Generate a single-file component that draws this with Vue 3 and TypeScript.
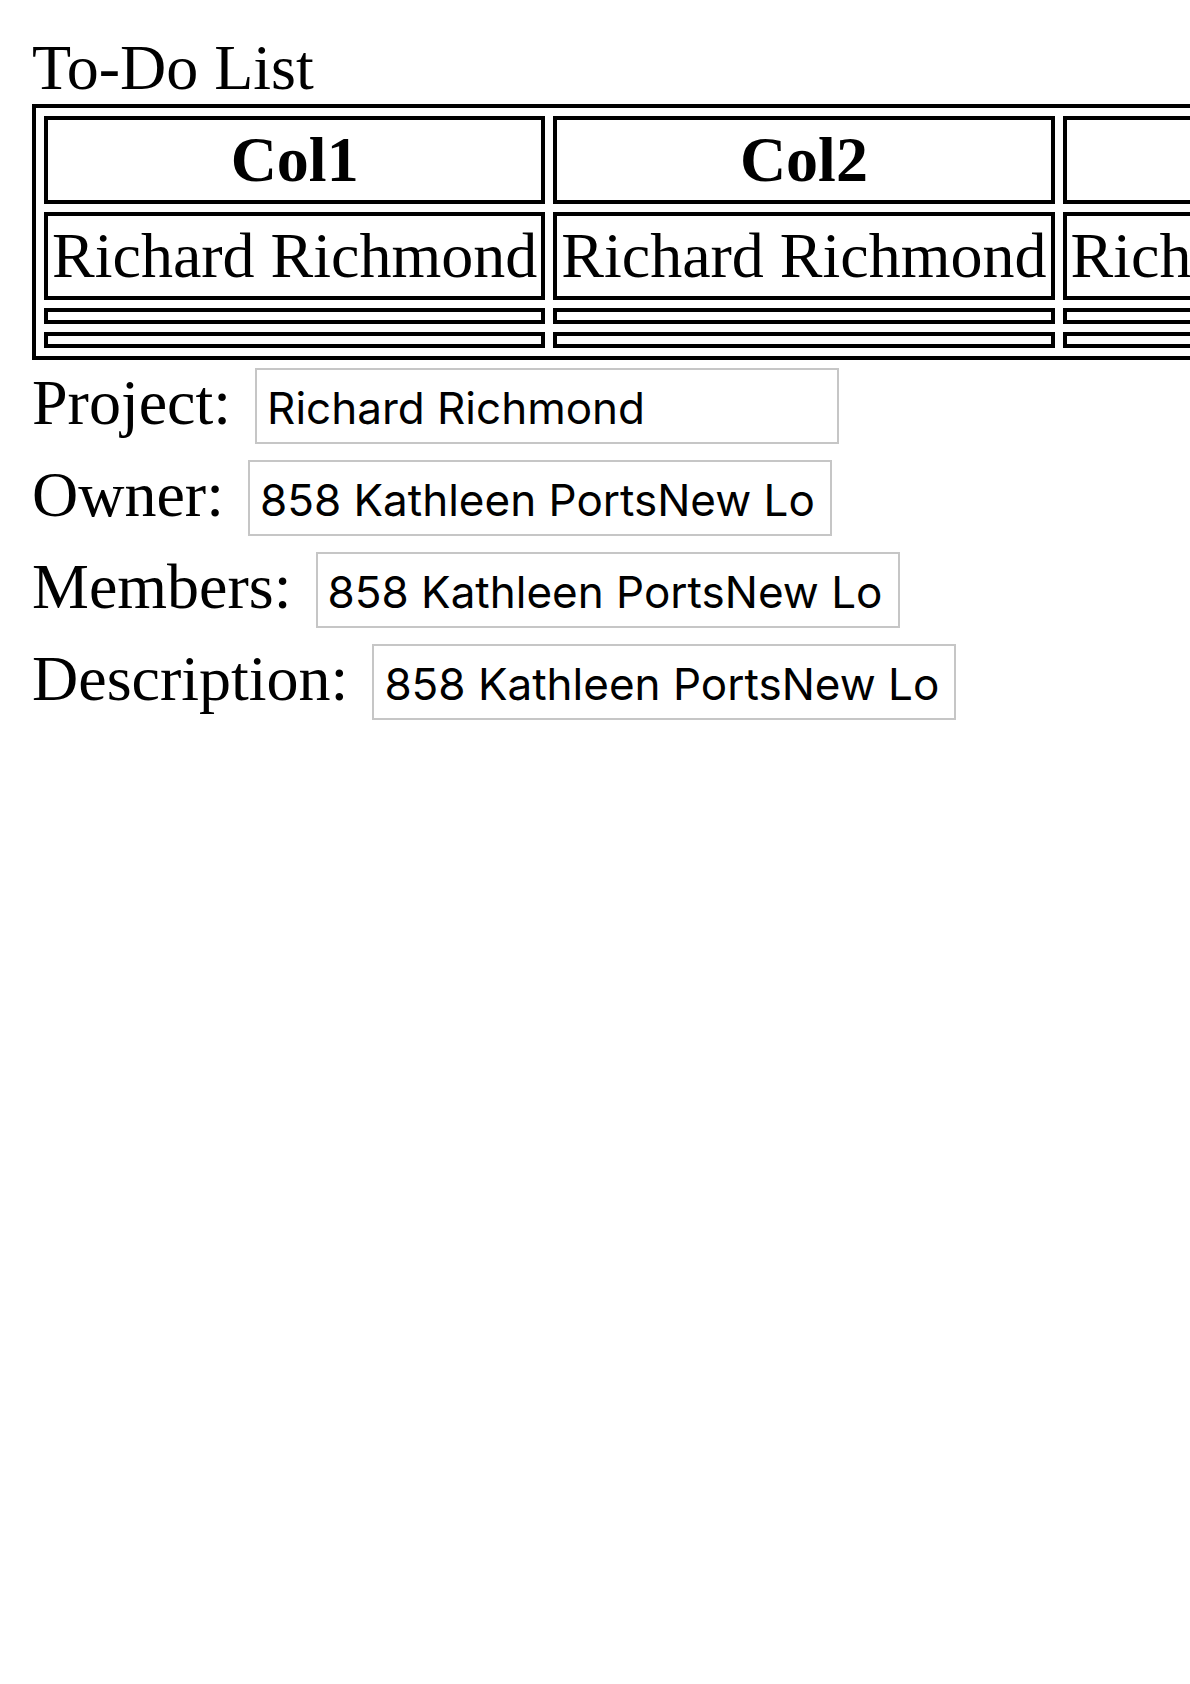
<script setup lang="ts">
import { ref } from 'vue'

interface Field {
  id: string
  label: string
  value: string
}

const columns: string[] = ['Col1', 'Col2', 'Col3']

const rows: string[][] = [
  ['Richard Richmond', 'Richard Richmond', 'Richard Richmond'],
  ['', '', ''],
  ['', '', ''],
]

const fields = ref<Field[]>([
  { id: 'project', label: 'Project:', value: 'Richard Richmond' },
  { id: 'owner', label: 'Owner:', value: '858 Kathleen PortsNew Lo' },
  { id: 'members', label: 'Members:', value: '858 Kathleen PortsNew Lo' },
  { id: 'description', label: 'Description:', value: '858 Kathleen PortsNew Lo' },
])
</script>

<template>
  <main class="page">
    <div class="title">To-Do List</div>
    <table class="board">
      <thead>
        <tr>
          <th v-for="column in columns" :key="column" scope="col">{{ column }}</th>
        </tr>
      </thead>
      <tbody>
        <tr v-for="(row, r) in rows" :key="r">
          <td v-for="(cell, c) in row" :key="c">{{ cell }}</td>
        </tr>
      </tbody>
    </table>
    <form class="fields" @submit.prevent>
      <div v-for="field in fields" :key="field.id" class="field">
        <label :for="field.id">{{ field.label }}</label>
        <input :id="field.id" v-model="field.value" type="text" />
      </div>
    </form>
  </main>
</template>

<style>
body {
  background: #fff;
}
</style>

<style scoped>
.page {
  padding: 32px 0 32px 32px;
  overflow: hidden;
  color: #000;
  font-family: "Liberation Serif", "Times New Roman", serif;
  font-size: 64px;
  line-height: 72px;
}

.board {
  border: 4px solid #000;
  border-collapse: separate;
  border-spacing: 8px;
  white-space: nowrap;
}

.board th,
.board td {
  padding: 4px;
  border: 4px solid #000;
}

.board th {
  font-weight: bold;
  text-align: center;
}

.field {
  display: flex;
  align-items: baseline;
  gap: 16px;
}

.field label {
  flex: none;
}

.field input {
  box-sizing: border-box;
  width: 584px;
  margin: 8px;
  padding: 12px 8px 8px 10px;
  border: 2px solid #c6c6c6;
  border-radius: 0;
  outline: none;
  background: #fff;
  color: #000;
  font-family: Inter, sans-serif;
  font-size: 44px;
  font-weight: 400;
  line-height: 52px;
}
</style>
